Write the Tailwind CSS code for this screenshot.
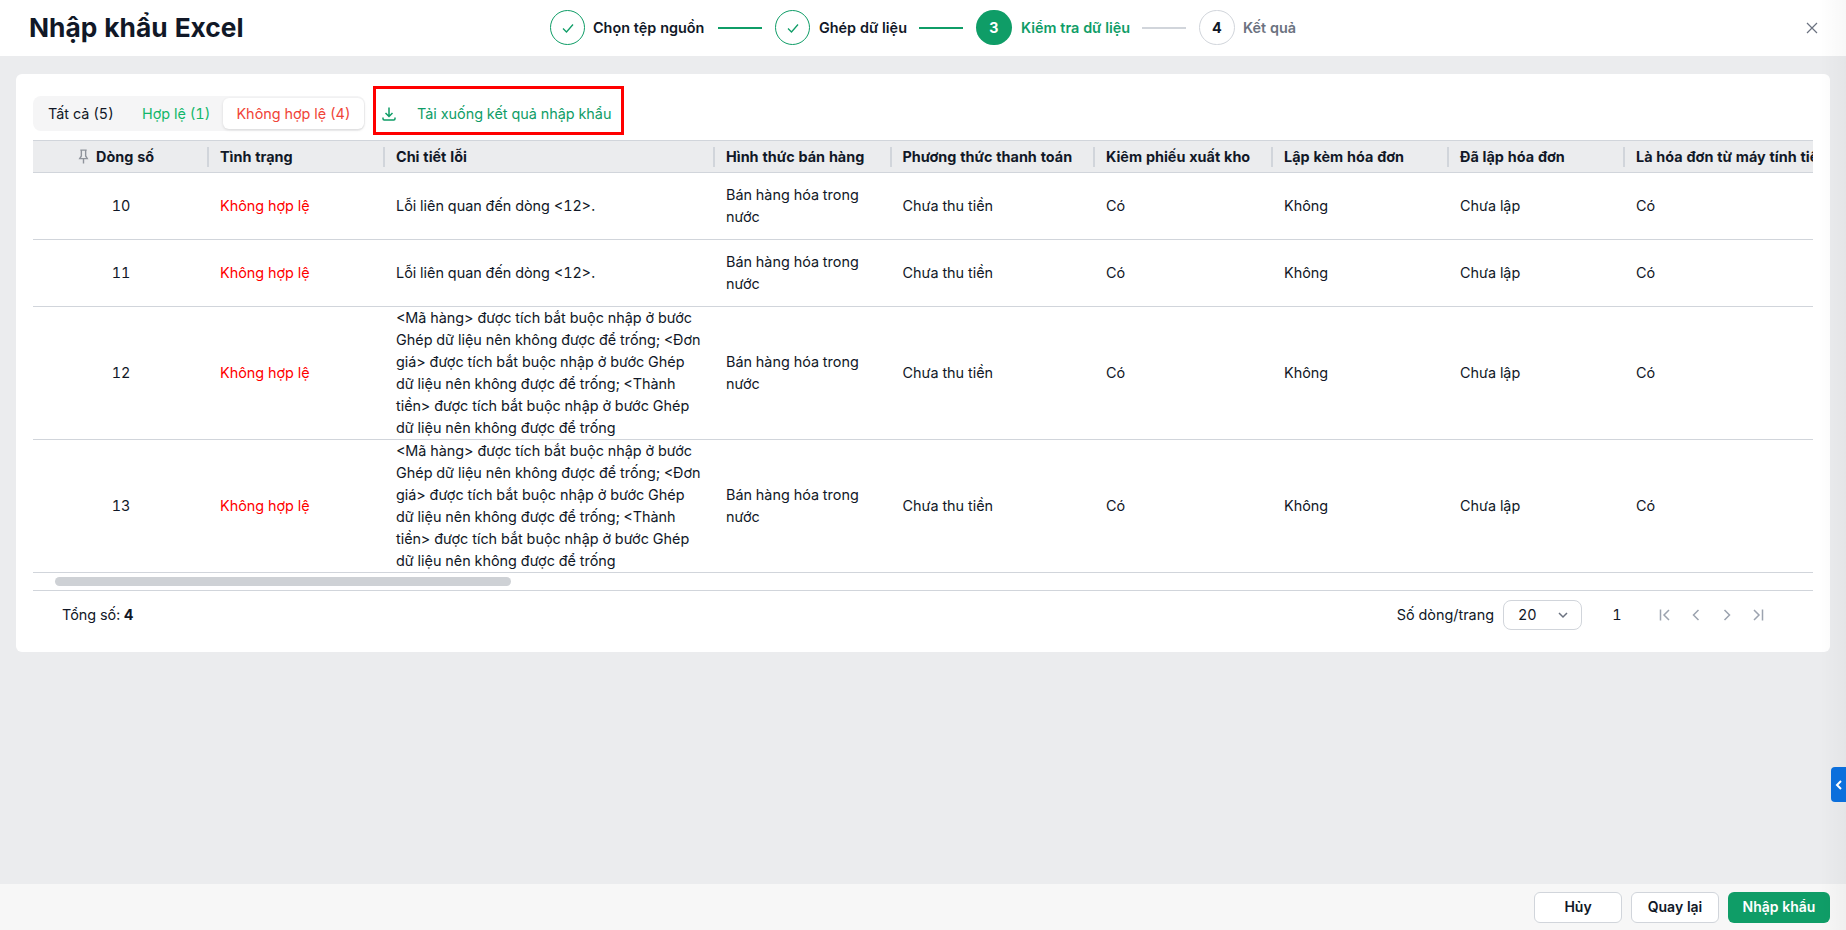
<!DOCTYPE html>
<html lang="vi">
<head>
<meta charset="utf-8">
<title>Nhập khẩu Excel</title>
<script src="https://cdn.jsdelivr.net/npm/@tailwindcss/browser@4"></script>
</head>
<body class="font-['Inter',sans-serif] text-[14.4px] leading-[22px] tabular-nums text-[#111827] bg-[#ebecee]">
<div class="relative w-[1846px] h-[930px] overflow-hidden flex flex-col bg-[#ebecee]">

  <!-- Header -->
  <header class="relative h-[56px] shrink-0 bg-white flex items-center">
    <h1 class="pl-[29px] text-[26.3px] leading-[32px] font-bold text-[#111827]">Nhập khẩu Excel</h1>
    <div class="absolute left-[550px] top-[10px] h-[35px] flex items-center font-semibold">
      <span class="w-[35px] h-[35px] rounded-full border border-[#0f9d67] flex items-center justify-center">
        <svg class="w-[14px] h-[14px]" viewBox="0 0 14 14" fill="none" stroke="#0f9d67" stroke-width="1.3"><path d="M2 7.500l3.500 3.500L12 3.500"/></svg>
      </span>
      <span class="ml-[8px] w-[112px] whitespace-nowrap">Chọn tệp nguồn</span>
      <span class="ml-[13px] w-[44px] h-[2px] bg-[#0f9d67]"></span>
      <span class="ml-[13px] w-[35px] h-[35px] rounded-full border border-[#0f9d67] flex items-center justify-center">
        <svg class="w-[14px] h-[14px]" viewBox="0 0 14 14" fill="none" stroke="#0f9d67" stroke-width="1.3"><path d="M2 7.500l3.500 3.500L12 3.500"/></svg>
      </span>
      <span class="ml-[9px] w-[87px] whitespace-nowrap">Ghép dữ liệu</span>
      <span class="ml-[13px] w-[44px] h-[2px] bg-[#0f9d67]"></span>
      <span class="ml-[13px] w-[36px] h-[35px] rounded-full bg-[#0f9d67] text-white font-bold flex items-center justify-center">3</span>
      <span class="ml-[9px] w-[109px] whitespace-nowrap text-[#0f9d67]">Kiểm tra dữ liệu</span>
      <span class="ml-[12px] w-[44px] h-[2px] bg-[#d1d5db]"></span>
      <span class="ml-[13px] w-[36px] h-[35px] rounded-full border border-[#d1d5db] font-bold flex items-center justify-center">4</span>
      <span class="ml-[8px] whitespace-nowrap text-[#6b7280]">Kết quả</span>
    </div>
    <svg class="absolute left-[1806px] top-[22px] w-[12px] h-[12px]" viewBox="0 0 12 12" fill="none" stroke="#6b7280" stroke-width="1.2"><path d="M1 1l10 10M11 1L1 11"/></svg>
  </header>

  <!-- Main card -->
  <main class="flex-1 pt-[18px] pl-[16px]">
    <section class="w-[1814px] h-[578px] bg-white rounded-[6px] pl-[17px] pt-[11px]">
      <div class="h-[55px] flex items-start">
        <div class="mt-[11px] w-[332px] h-[35px] rounded-[8px] bg-[#f5f5f6] flex items-center p-[2px]">
          <span class="pl-[13px] w-[107px] shrink-0 whitespace-nowrap">Tất cả (5)</span>
          <span class="w-[81px] shrink-0 whitespace-nowrap text-[#12b76a]">Hợp lệ (1)</span>
          <span class="w-[141px] h-[31px] shrink-0 rounded-[6px] bg-white shadow-[0_1px_3px_rgba(0,0,0,0.12)] flex items-center justify-center whitespace-nowrap text-[#f04438]">Không hợp lệ (4)</span>
        </div>
        <div class="ml-[8px] mt-[1px] w-[251px] h-[49px] border-[3px] border-[#ff0000] flex items-center pt-[6px] text-[#0f9d67]">
          <svg class="ml-[5px] w-[16px] h-[16px] shrink-0" viewBox="0 0 16 16" fill="none" stroke="#0f9d67" stroke-width="1.5"><path d="M8 1.500v8.500M4.500 7l3.500 3.500L11.500 7M2 11.500v1.300a1.200 1.200 0 0 0 1.200 1.200h9.600a1.200 1.200 0 0 0 1.200-1.200v-1.300"/></svg>
          <span class="ml-[20px] whitespace-nowrap">Tải xuống kết quả nhập khẩu</span>
        </div>
      </div>

      <!-- Table -->
      <div class="w-[1780px] overflow-hidden">
        <div class="w-[2000px]">
          <div class="h-[33px] flex items-center bg-[#ebecee] border-y border-[#d1d5db] font-bold whitespace-nowrap">
            <div class="w-[176px] h-[20px] shrink-0 border-r-2 border-[#d1d5db] flex items-center pl-[44px] gap-[6px]">
              <svg class="w-[13px] h-[15px]" viewBox="0 0 12 14" fill="none" stroke="#8f949c" stroke-width="1.3"><path d="M3 1h6M4 1v5.500L2.500 9h7L8 6.500V1M6 9v4.500"/></svg>
              <span>Dòng số</span>
            </div>
            <div class="w-[176px] h-[20px] shrink-0 border-r-2 border-[#d1d5db] pl-[11px] flex items-center">Tình trạng</div>
            <div class="w-[330px] h-[20px] shrink-0 border-r-2 border-[#d1d5db] pl-[11px] flex items-center">Chi tiết lỗi</div>
            <div class="w-[176.5px] h-[20px] shrink-0 border-r-2 border-[#d1d5db] pl-[11px] flex items-center">Hình thức bán hàng</div>
            <div class="w-[203.5px] h-[20px] shrink-0 border-r-2 border-[#d1d5db] pl-[11px] flex items-center">Phương thức thanh toán</div>
            <div class="w-[178px] h-[20px] shrink-0 border-r-2 border-[#d1d5db] pl-[11px] flex items-center">Kiêm phiếu xuất kho</div>
            <div class="w-[176px] h-[20px] shrink-0 border-r-2 border-[#d1d5db] pl-[11px] flex items-center">Lập kèm hóa đơn</div>
            <div class="w-[176px] h-[20px] shrink-0 border-r-2 border-[#d1d5db] pl-[11px] flex items-center">Đã lập hóa đơn</div>
            <div class="w-[300px] h-[20px] shrink-0 pl-[11px] flex items-center">Là hóa đơn từ máy tính tiền</div>
          </div>

          <div class="h-[67px] flex items-center border-b border-[#d1d5db]">
            <div class="w-[176px] shrink-0 text-center">10</div>
            <div class="w-[176px] shrink-0 pl-[11px] text-[#ff0000]">Không hợp lệ</div>
            <div class="w-[330px] shrink-0 pl-[11px] pr-[12px]">Lỗi liên quan đến dòng &lt;12&gt;.</div>
            <div class="w-[176.5px] shrink-0 pl-[11px] pr-[12px]">Bán hàng hóa trong nước</div>
            <div class="w-[203.5px] shrink-0 pl-[11px]">Chưa thu tiền</div>
            <div class="w-[178px] shrink-0 pl-[11px]">Có</div>
            <div class="w-[176px] shrink-0 pl-[11px]">Không</div>
            <div class="w-[176px] shrink-0 pl-[11px]">Chưa lập</div>
            <div class="w-[300px] shrink-0 pl-[11px]">Có</div>
          </div>
          <div class="h-[67px] flex items-center border-b border-[#d1d5db]">
            <div class="w-[176px] shrink-0 text-center">11</div>
            <div class="w-[176px] shrink-0 pl-[11px] text-[#ff0000]">Không hợp lệ</div>
            <div class="w-[330px] shrink-0 pl-[11px] pr-[12px]">Lỗi liên quan đến dòng &lt;12&gt;.</div>
            <div class="w-[176.5px] shrink-0 pl-[11px] pr-[12px]">Bán hàng hóa trong nước</div>
            <div class="w-[203.5px] shrink-0 pl-[11px]">Chưa thu tiền</div>
            <div class="w-[178px] shrink-0 pl-[11px]">Có</div>
            <div class="w-[176px] shrink-0 pl-[11px]">Không</div>
            <div class="w-[176px] shrink-0 pl-[11px]">Chưa lập</div>
            <div class="w-[300px] shrink-0 pl-[11px]">Có</div>
          </div>
          <div class="h-[133px] flex items-center border-b border-[#d1d5db]">
            <div class="w-[176px] shrink-0 text-center">12</div>
            <div class="w-[176px] shrink-0 pl-[11px] text-[#ff0000]">Không hợp lệ</div>
            <div class="w-[330px] shrink-0 pl-[11px] pr-[12px]">&lt;Mã hàng&gt; được tích bắt buộc nhập ở bước Ghép dữ liệu nên không được để trống; &lt;Đơn giá&gt; được tích bắt buộc nhập ở bước Ghép dữ liệu nên không được để trống; &lt;Thành tiền&gt; được tích bắt buộc nhập ở bước Ghép dữ liệu nên không được để trống</div>
            <div class="w-[176.5px] shrink-0 pl-[11px] pr-[12px]">Bán hàng hóa trong nước</div>
            <div class="w-[203.5px] shrink-0 pl-[11px]">Chưa thu tiền</div>
            <div class="w-[178px] shrink-0 pl-[11px]">Có</div>
            <div class="w-[176px] shrink-0 pl-[11px]">Không</div>
            <div class="w-[176px] shrink-0 pl-[11px]">Chưa lập</div>
            <div class="w-[300px] shrink-0 pl-[11px]">Có</div>
          </div>
          <div class="h-[133px] flex items-center border-b border-[#d1d5db]">
            <div class="w-[176px] shrink-0 text-center">13</div>
            <div class="w-[176px] shrink-0 pl-[11px] text-[#ff0000]">Không hợp lệ</div>
            <div class="w-[330px] shrink-0 pl-[11px] pr-[12px]">&lt;Mã hàng&gt; được tích bắt buộc nhập ở bước Ghép dữ liệu nên không được để trống; &lt;Đơn giá&gt; được tích bắt buộc nhập ở bước Ghép dữ liệu nên không được để trống; &lt;Thành tiền&gt; được tích bắt buộc nhập ở bước Ghép dữ liệu nên không được để trống</div>
            <div class="w-[176.5px] shrink-0 pl-[11px] pr-[12px]">Bán hàng hóa trong nước</div>
            <div class="w-[203.5px] shrink-0 pl-[11px]">Chưa thu tiền</div>
            <div class="w-[178px] shrink-0 pl-[11px]">Có</div>
            <div class="w-[176px] shrink-0 pl-[11px]">Không</div>
            <div class="w-[176px] shrink-0 pl-[11px]">Chưa lập</div>
            <div class="w-[300px] shrink-0 pl-[11px]">Có</div>
          </div>
        </div>
        <!-- Scrollbar -->
        <div class="h-[18px] border-b border-[#d1d5db] pt-[4px] pl-[22px]">
          <div class="w-[456px] h-[9px] rounded-full bg-[#ced1d5]"></div>
        </div>
      </div>

      <!-- Pagination -->
      <div class="w-[1780px] h-[48px] flex items-center pl-[29px]">
        <span>Tổng số: <b class="font-bold">4</b></span>
        <span class="ml-auto">Số dòng/trang</span>
        <div class="ml-[9px] w-[79px] h-[30px] rounded-[8px] border border-[#d1d5db] flex items-center pl-[14px] pr-[12px]">
          <span>20</span>
          <svg class="ml-auto w-[12px] h-[12px]" viewBox="0 0 12 12" fill="none" stroke="#6b7280" stroke-width="1.5"><path d="M2 4l4 4 4-4"/></svg>
        </div>
        <span class="ml-[30px] w-[10px] text-center">1</span>
        <div class="ml-[36px] mr-[48px] flex items-center gap-[17px]">
          <svg class="w-[14px] h-[14px]" viewBox="0 0 14 14" fill="none" stroke="#9ca3af" stroke-width="1.5"><path d="M2.500 1.500v11M11 2L6 7l5 5"/></svg>
          <svg class="w-[14px] h-[14px]" viewBox="0 0 14 14" fill="none" stroke="#9ca3af" stroke-width="1.5"><path d="M9.500 2L4.500 7l5 5"/></svg>
          <svg class="w-[14px] h-[14px]" viewBox="0 0 14 14" fill="none" stroke="#9ca3af" stroke-width="1.5"><path d="M4.500 2l5 5-5 5"/></svg>
          <svg class="w-[14px] h-[14px]" viewBox="0 0 14 14" fill="none" stroke="#9ca3af" stroke-width="1.5"><path d="M11.500 1.500v11M3 2l5 5-5 5"/></svg>
        </div>
      </div>
    </section>
  </main>

  <!-- Footer -->
  <footer class="h-[46px] shrink-0 bg-[#f7f7f7] flex items-center justify-end gap-[9px] pr-[16px] text-[14px] font-semibold">
    <button class="w-[88px] h-[31px] rounded-[6px] border border-[#d1d5db] bg-white">Hủy</button>
    <button class="w-[88px] h-[31px] rounded-[6px] border border-[#d1d5db] bg-white">Quay lại</button>
    <button class="w-[102px] h-[31px] rounded-[6px] bg-[#0f9d67] text-white">Nhập khẩu</button>
  </footer>

  <!-- Right edge shade -->
  <div class="absolute right-0 top-0 bottom-0 w-[26px] bg-linear-to-r from-transparent to-black/[0.03] pointer-events-none"></div>

  <!-- Side tab -->
  <div class="absolute left-[1831px] top-[767px] w-[15px] h-[35px] rounded-l-[4px] bg-[#0b6fdc] flex items-center justify-center">
    <svg class="w-[8px] h-[10px]" viewBox="0 0 8 10" fill="none" stroke="#ffffff" stroke-width="2"><path d="M6 1L2 5l4 4"/></svg>
  </div>
</div>
</body>
</html>
